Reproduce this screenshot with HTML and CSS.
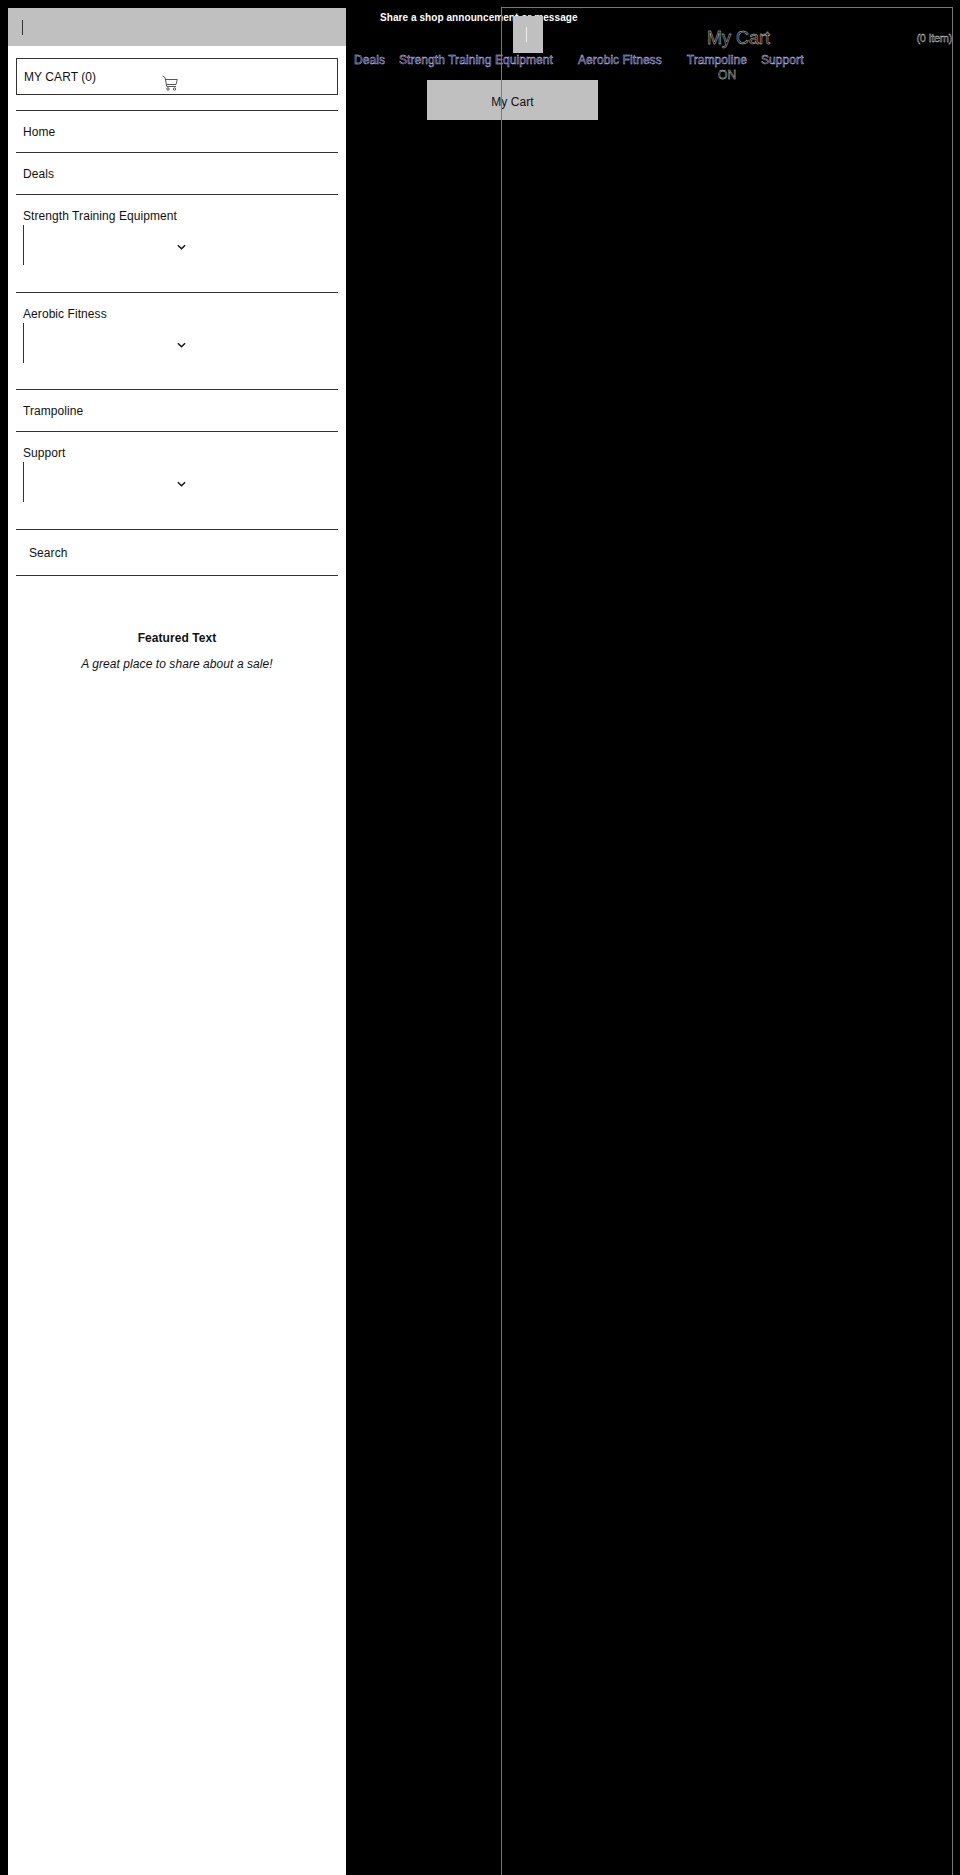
FILE: index.html
```html
<!DOCTYPE html>
<html lang="en">
<head>
<meta charset="utf-8">
<title>Shop</title>
<link rel="stylesheet" href="styles.css">
</head>
<body>
<aside class="sidebar">
  <div class="side-top"><span class="bar"></span></div>
  <div class="side-body">
    <a class="cart-box">
      <span class="cart-label">MY CART (0)</span>
      <svg class="cart-icon" viewBox="0 0 16 16" fill="none" stroke="#444" stroke-width="0.9"><path d="M0.5 1L3 2.5L4.8 11.5H14"/><path d="M3.4 4.5H15.3L14 9.5H4.4"/><circle cx="6" cy="14" r="1.2"/><circle cx="12.5" cy="14" r="1.2"/></svg>
    </a>
    <ul class="side-nav">
      <li class="item">Home</li>
      <li class="item">Deals</li>
      <li class="item group">Strength Training Equipment
        <div class="sub"><svg class="chev" viewBox="0 0 10 6" fill="none" stroke="#111" stroke-width="1.6"><path d="M1 1l4 4 4-4"/></svg></div>
      </li>
      <li class="item group">Aerobic Fitness
        <div class="sub"><svg class="chev" viewBox="0 0 10 6" fill="none" stroke="#111" stroke-width="1.6"><path d="M1 1l4 4 4-4"/></svg></div>
      </li>
      <li class="item">Trampoline</li>
      <li class="item group">Support
        <div class="sub"><svg class="chev" viewBox="0 0 10 6" fill="none" stroke="#111" stroke-width="1.6"><path d="M1 1l4 4 4-4"/></svg></div>
      </li>
      <li class="item search">Search</li>
    </ul>
    <div class="featured">
      <h3 class="feat-title">Featured Text</h3>
      <p class="feat-text">A great place to share about a sale!</p>
    </div>
  </div>
</aside>
<main class="main">
  <p class="announce">Share a shop announcement or message</p>
  <nav class="top-nav">
    <a class="nav-link">Deals</a>
    <a class="nav-link">Strength Training Equipment</a>
    <a class="nav-link">Aerobic Fitness</a>
    <a class="nav-link">Trampoline</a>
    <a class="nav-link">Support</a>
  </nav>
  <a class="my-cart">My Cart</a>
</main>
<section class="drawer">
  <div class="drawer-btn"><span class="bar light"></span></div>
  <h2 class="drawer-title">My Cart</h2>
  <span class="drawer-count">(0 Item)</span>
  <span class="drawer-on">ON</span>
</section>
</body>
</html>
```
FILE: styles.css
```css
html, body { margin: 0; padding: 0; }
body {
  background: #000;
  width: 960px;
  height: 1875px;
  overflow: hidden;
  position: relative;
  display: flex;
  box-sizing: border-box;
  padding: 8px 0 0 8px;
  font-family: "Liberation Sans", Arial, sans-serif;
  font-size: 12px;
  letter-spacing: 0.07px;
  color: #111;
}
.sidebar { width: 338px; background: #fff; flex: none; }
.side-top { height: 38px; background: #c0c0c0; display: flex; align-items: center; padding-left: 14px; }
.bar { display: block; width: 1px; height: 15px; background: #333; }
.bar.light { background: #eee; }
.side-body { padding: 12px 8px 0; }
.cart-box {
  display: block;
  position: relative;
  height: 35px;
  border: 1px solid #333;
  padding-left: 7px;
  line-height: 35px;
  margin-bottom: 15px;
}
.cart-label { position: relative; top: 1px; }
.cart-icon { position: absolute; left: 145px; top: 16px; width: 16px; height: 16px; }
.side-nav { list-style: none; margin: 0; padding: 0; border-top: 1px solid #333; }
.item { height: 41px; line-height: 42px; padding-left: 7px; border-bottom: 1px solid #333; }
.group { line-height: 12px; padding-top: 15px; height: 81.5px; }
.sub { position: relative; height: 40px; margin-top: 3px; border-left: 1px solid #333; }
.chev { position: absolute; left: 153px; top: 19px; width: 9px; height: 6px; }
.search { height: 45px; line-height: 46px; padding-left: 13px; }
.featured { text-align: center; padding-top: 54px; }
.feat-title { margin: 0; font-size: 12px; font-weight: 700; line-height: 16px; }
.feat-text { margin: 10px 0 0; font-size: 12px; font-style: italic; line-height: 16px; }
.main { flex: 1; min-width: 0; padding-left: 1px; }
.announce {
  margin: 3px 0 0;
  padding-left: 33px;
  font-size: 10px;
  font-weight: 700;
  line-height: 13px;
  letter-spacing: 0.07px;
  color: #fff;
}
.top-nav { display: flex; padding: 29px 0 0 7px; }
.nav-link {
  font-size: 12px;
  line-height: 14px;
  color: #000;
  -webkit-text-stroke: 0.45px #c8c8ff;
  margin-right: 14px;
}
.nav-link:nth-child(2) { margin-right: 25px; }
.nav-link:nth-child(3) { margin-right: 25px; }
.my-cart {
  display: block;
  width: 171px;
  height: 38px;
  margin: 13px 0 0 80px;
  padding-top: 2px;
  background: #c0c0c0;
  text-align: center;
  line-height: 40px;
}
.drawer {
  position: absolute;
  left: 501px;
  top: 7px;
  width: 450px;
  height: 1868px;
  border: 1px solid #777;
  border-bottom: 0;
}
.drawer-btn {
  position: absolute;
  left: 11px;
  top: 8px;
  width: 30px;
  height: 37px;
  box-sizing: border-box;
  padding-right: 3px;
  background: #c0c0c0;
  display: flex;
  align-items: center;
  justify-content: center;
}
.drawer-title {
  position: absolute;
  left: 205px;
  top: 19px;
  margin: 0;
  font-size: 18px;
  font-weight: 400;
  line-height: 22px;
  letter-spacing: 0;
  color: #000;
  -webkit-text-stroke: 0.4px #e0e0e0;
}
.drawer-count {
  position: absolute;
  right: 0;
  top: 23px;
  white-space: nowrap;
  font-size: 11px;
  line-height: 14px;
  letter-spacing: -0.3px;
  color: #000;
  -webkit-text-stroke: 0.4px #d8d8d8;
}
.drawer-on {
  position: absolute;
  left: 216px;
  top: 60px;
  font-size: 12px;
  line-height: 14px;
  color: #000;
  -webkit-text-stroke: 0.4px #d8d8d8;
}
```
